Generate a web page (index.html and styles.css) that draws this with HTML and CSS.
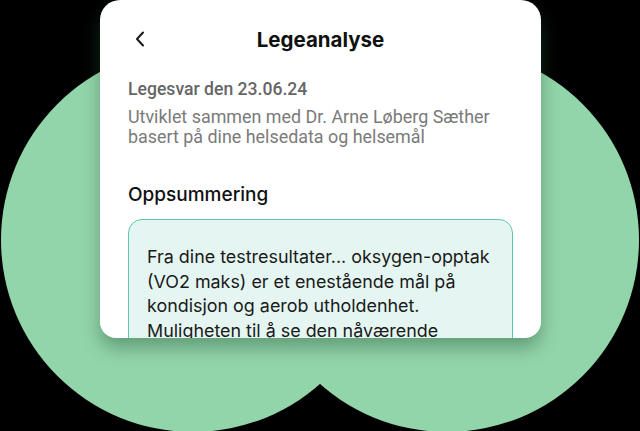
FILE: index.html
```html
<!DOCTYPE html>
<html lang="no">
<head>
<meta charset="utf-8">
<title>Legeanalyse</title>
<link rel="stylesheet" href="styles.css">
</head>
<body>
<div class="stage">
  <div class="blob blob-left"></div>
  <div class="blob blob-right"></div>
  <div class="card">
    <header class="card-header">
      <button class="back" aria-label="Tilbake">
        <svg width="10" height="16" viewBox="0 0 10 16"><polyline points="8,1.5 2,8 8,14.5" fill="none" stroke="#1a1a1a" stroke-width="2" stroke-linecap="round" stroke-linejoin="round"/></svg>
      </button>
      <h1 class="title">Legeanalyse</h1>
      <span></span>
    </header>
    <section class="meta">
      <p class="meta-date">Legesvar den 23.06.24</p>
      <p class="meta-desc">Utviklet sammen med Dr. Arne Løberg Sæther basert på dine helsedata og helsemål</p>
    </section>
    <h2 class="section-title">Oppsummering</h2>
    <div class="summary">
      <p>Fra dine testresultater... oksygen-opptak (VO2 maks) er et enestående mål på kondisjon og aerob utholdenhet. Muligheten til å se den nåværende</p>
    </div>
  </div>
</div>
</body>
</html>
```

FILE: styles.css
```css
* { box-sizing: border-box; }
html, body { margin: 0; padding: 0; }
body {
  background: #000;
  width: 640px;
  height: 431px;
  overflow: hidden;
}
.stage {
  position: relative;
  width: 640px;
  height: 431px;
  overflow: hidden;
  display: flex;
  justify-content: center;
  align-items: flex-start;
}
.blob {
  position: absolute;
  width: 384px;
  height: 384px;
  border-radius: 50%;
  background: #93d5ab;
  top: 48px;
}
.blob-left { left: 1px; }
.blob-right { left: 255px; }
.card {
  position: relative;
  width: 441px;
  height: 338px;
  margin-left: 1px;
  background: #fff;
  border-radius: 20px 20px 16px 16px;
  overflow: hidden;
  padding: 0 28px;
  box-shadow: 0 10px 18px rgba(40, 90, 60, 0.45);
  font-family: Roboto, "Liberation Sans", sans-serif;
}
.card-header {
  display: grid;
  grid-template-columns: 1fr auto 1fr;
  align-items: center;
  height: 79px;
  padding-bottom: 1px;
}
.back {
  border: 0;
  background: none;
  padding: 0;
  margin-left: 7px;
  width: 12px;
  height: 16px;
  display: flex;
  align-items: center;
  justify-self: start;
}
.title {
  margin: 0;
  font-family: Inter, Roboto, sans-serif;
  font-weight: 700;
  font-size: 20.5px;
  color: #111;
}
.meta p { margin: 0; }
.meta-date {
  font-weight: 500;
  font-size: 17.6px;
  line-height: 20px;
  color: #666;
}
.meta-desc {
  margin-top: 8px !important;
  font-size: 17.9px;
  line-height: 20px;
  color: #7a7a7a;
}
.section-title {
  margin: 36px 0 0;
  font-family: Inter, sans-serif;
  font-weight: 500;
  font-size: 19px;
  line-height: 24px;
  color: #111;
}
.summary {
  margin-top: 12px;
  background: #e5f6f2;
  border: 1.5px solid #5cc8b0;
  border-radius: 14px;
  padding: 25px 16px 20px 18px;
}
.summary p {
  margin: 0;
  font-family: Inter, sans-serif;
  font-size: 17.9px;
  line-height: 24.7px;
  color: #1a1a1a;
}
```
